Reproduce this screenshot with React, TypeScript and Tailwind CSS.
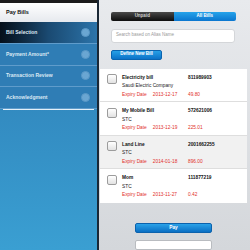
import React from 'react'

type Bill = { name: string; company: string; expiry: string; number: string; amount: string; shaded?: boolean }

const bills: Bill[] = [
  { name: 'Electricity bill', company: 'Saudi Electric Company', expiry: '2013-12-17', number: '811989903', amount: '49.80' },
  { name: 'My Mobile Bill', company: 'STC', expiry: '2013-12-19', number: '572621006', amount: '225.01' },
  { name: 'Land Line', company: 'STC', expiry: '2014-01-18', number: '2001662255', amount: '896.00', shaded: true },
  { name: 'Mom', company: 'STC', expiry: '2013-11-27', number: '111877219', amount: '0.42' },
]

const steps = ['Payment Amount*', 'Transaction Review', 'Acknowledgment']

function StepDot() {
  return <span className="w-[9px] h-[9px] rounded-full bg-[#6aa6d2] border border-[#5a98c6] shrink-0" />
}

export default function App() {
  return (
    <div
      className="w-[250px] h-[250px] flex overflow-hidden"
      style={{ fontFamily: '"Liberation Sans", Arial, sans-serif' }}
    >
      {/* sidebar */}
      <aside className="w-[99px] shrink-0 flex flex-col border-r-2 border-[#1a2836] bg-gradient-to-b from-[#2d7bb3] to-[#3a9fd2]">
        <div className="h-[3px] bg-[#1c1c1c]" />
        <div className="h-[19px] flex items-center pl-[6px] bg-gradient-to-b from-white to-[#e6e9ee] text-[5.5px] font-bold text-[#111]">
          Pay Bills
        </div>
        <div className="h-[22px] flex items-center justify-between pl-[6px] pr-[7px] bg-gradient-to-r from-[#050f1a] via-[#1a4a72] to-[#2c74aa] border-b border-[#5f9ccb]">
          <span className="text-[5px] font-bold text-[#dfeaf3]">Bill Selection</span>
          <StepDot />
        </div>
        {steps.map(s => (
          <div
            key={s}
            className="h-[21.5px] flex items-center justify-between pl-[6px] pr-[7px] bg-[#2f7db5] border-b border-[#5f9ccb]"
          >
            <span className="text-[5px] font-bold text-[#dbe9f4]">{s}</span>
            <StepDot />
          </div>
        ))}
        <div className="h-[1px] mx-[3px] bg-[#e3f0f9]" />
      </aside>

      {/* main */}
      <main className="flex-1 flex flex-col bg-gradient-to-b from-[#e8eaed] to-[#d4d7db]">
        <div className="ml-[12px] w-[125px] mt-[12px] h-[10px] flex rounded-[2px] overflow-hidden">
          <div className="flex-1 flex items-center justify-center bg-gradient-to-b from-[#4a4a4a] to-[#0e0e0e] text-[4.5px] text-[#cfcfcf] font-bold">
            Unpaid
          </div>
          <div className="flex-1 flex items-center justify-center bg-gradient-to-b from-[#26a3ea] to-[#0a76cf] text-[4.5px] text-white font-bold">
            All Bills
          </div>
        </div>

        <div className="ml-[12px] w-[124px] mt-[8px] h-[15px] flex items-center pl-[4px] bg-white rounded-[3px] border border-[#d4d6d9] text-[4.5px] text-[#9a9a9a]">
          Search based on Alias Name
        </div>

        <div className="ml-[12px] w-[51px] mt-[7px] h-[11px] flex items-center justify-center rounded-[2px] bg-gradient-to-b from-[#27a0e6] to-[#0b72c8] border border-[#0a64b0] text-[4.5px] font-bold text-white">
          Define New Bill
        </div>

        <div className="ml-[1px] w-[147px] mt-[9px] bg-white flex flex-col">
          {bills.map((b, i) => (
            <div
              key={b.name}
              className={`h-[33.5px] flex pt-[5px] ${b.shaded ? 'bg-[#f1f1f1]' : 'bg-white'} ${i < bills.length - 1 ? 'border-b border-[#dedede]' : ''}`}
            >
              <div className="w-[22px] pl-[7px] pt-[0.5px]">
                <div className="w-[10px] h-[10px] rounded-[2px] border border-[#9c9c9c] bg-gradient-to-b from-white to-[#e2e2e2]" />
              </div>
              <div className="w-[66px] flex flex-col leading-[8.5px]">
                <span className="text-[4.8px] font-bold text-[#111]">{b.name}</span>
                <span className="text-[4.8px] text-[#222]">{b.company}</span>
                <span className="text-[4.8px] text-[#e2302c]">
                  Expiry Date<span className="ml-[6px]">{b.expiry}</span>
                </span>
              </div>
              <div className="flex flex-col leading-[8.5px]">
                <span className="text-[4.8px] font-bold text-[#111]">{b.number}</span>
                <span className="text-[4.8px]">&nbsp;</span>
                <span className="text-[4.8px] text-[#e2302c]">{b.amount}</span>
              </div>
            </div>
          ))}
        </div>

        <div className="ml-[36px] w-[77px] mt-[20px] h-[11px] flex items-center justify-center rounded-[2px] bg-gradient-to-b from-[#2aa2e8] to-[#0a6fc4] border border-[#0b62ad] text-[4.8px] font-bold text-white">
          Pay
        </div>
        <div className="ml-[36px] w-[77px] mt-[7px] h-[11px] rounded-[2px] bg-white border border-[#b9bcc0]" />
      </main>
    </div>
  )
}
